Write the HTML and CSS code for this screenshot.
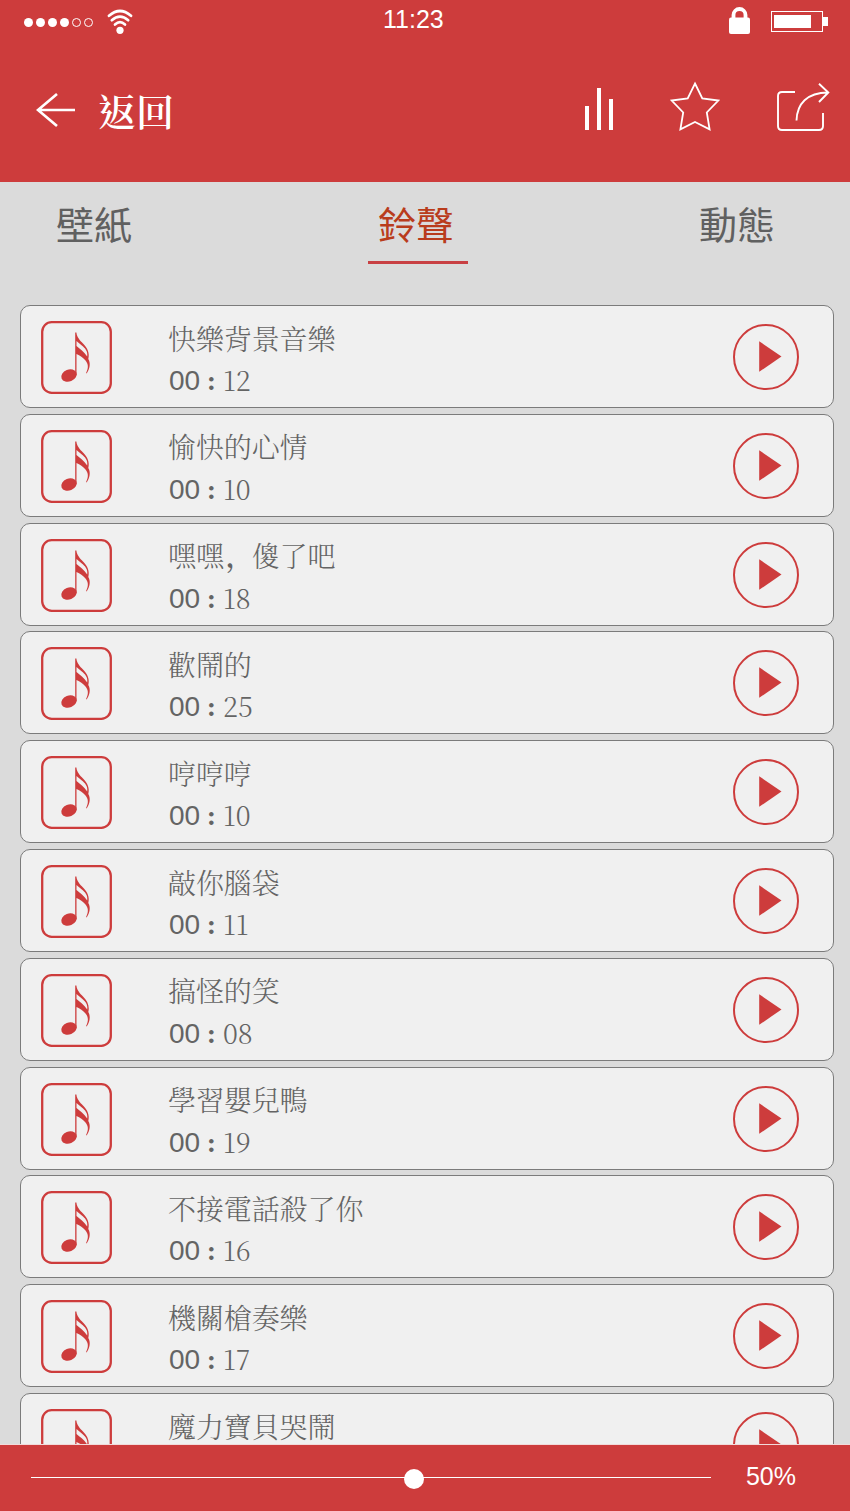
FILE: index.html
```html
<!DOCTYPE html>
<html lang="zh-Hant">
<head>
<meta charset="utf-8">
<title>鈴聲</title>
<link rel="stylesheet" href="styles.css">
</head>
<body>
<svg class="defs" aria-hidden="true">
  <symbol id="note" viewBox="0 0 71 73">
    <rect x="1.200" y="1.200" width="68.600" height="70.600" rx="9.500" fill="none" stroke="currentColor" stroke-width="2.300"/>
    <ellipse cx="28" cy="54.500" rx="8" ry="6" transform="rotate(-22 28 54.500)" fill="currentColor"/>
    <path fill="currentColor" d="M34.200 11.500h1.200C35.800 16 39 19.500 42 22.500C46.500 27 48.800 32 47.300 38C49.700 42 49 47.500 45.700 52.500L45.100 52C48 46 47 42.500 44.500 39.500C42 36.500 39 34.500 35.500 33V54H34.200zM35.500 20V25C39 28 43 30.500 46.200 35.500C47 30 44 27 40.500 24.200C38.500 22.600 37 21.500 35.500 20z" fill-rule="evenodd"/>
  </symbol>
  <symbol id="play" viewBox="0 0 66 66">
    <circle cx="33" cy="33" r="32" fill="none" stroke="currentColor" stroke-width="2"/>
    <path d="M26.200 17.300v30.500L48.500 32.500z" fill="currentColor"/>
  </symbol>
</svg>
<div class="screen">
  <header class="header">
    <div class="status">
      <svg class="signal" viewBox="0 0 70 10"><g fill="#fff"><circle cx="4.500" cy="5.500" r="4.500"/><circle cx="16.500" cy="5.500" r="4.500"/><circle cx="28.500" cy="5.500" r="4.500"/><circle cx="40.500" cy="5.500" r="4.500"/></g><g fill="none" stroke="#fff"><circle cx="52.500" cy="5.500" r="4"/><circle cx="64.500" cy="5.500" r="4"/></g></svg>
      <svg class="wifi" viewBox="0 0 26 26"><g fill="none" stroke="#fff" stroke-width="2.700" stroke-linecap="round"><path d="M2 6.800q11-9.600 22 0"/><path d="M4.800 11.200q8.200-7.200 16.400 0"/><path d="M8 15.500q5-4.600 10 0"/></g><circle cx="13" cy="21.300" r="3.600" fill="#fff"/></svg>
      <span class="clock">11:23</span>
      <svg class="lock" viewBox="0 0 21 28"><rect y="10.500" width="21" height="16.500" rx="2" fill="#fff"/><path d="M4.500 12V8a6 6 0 0 1 12 0V12" fill="none" stroke="#fff" stroke-width="3.800"/></svg>
      <svg class="battery" viewBox="0 0 58 22"><rect x=".5" y=".5" width="51" height="20" fill="none" stroke="#fff"/><path d="M3 4h37v13H3zM52 6h5v9h-5z" fill="#fff"/></svg>
    </div>
    <nav class="toolbar">
      <svg class="arrow" viewBox="0 0 41 36"><path d="M21 2 2 18l19 16M2 18h37" fill="none" stroke="#fff" stroke-width="2.700"/></svg>
      <span class="back">返回</span>
      <svg class="bars" viewBox="0 0 28 42"><path d="M0 18h4v24H0zM12 0h4v42h-4zM24 11h4v31h-4z" fill="#fff"/></svg>
      <svg class="star" viewBox="0 0 50 51"><path d="m25 2.500 7.300 14.800 16 2.200-11.500 12 2.800 16.800L25 41l-14.600 7.300 2.800-16.800-11.500-12 16-2.200z" fill="none" stroke="#fff" stroke-width="1.800"/></svg>
      <svg class="share" viewBox="0 0 53 50"><g fill="none" stroke="#fff" stroke-width="1.900"><path d="M18 10H5Q1 10 1 14v30q0 4 4 4h37q4 0 4-4V31"/><path d="M19.500 38.500C20 22 30 10.500 51 10.500M42 1.800l9.300 8.700-9.300 9.500"/></g></svg>
    </nav>
  </header>
  <nav class="tabs">
    <span class="tab">壁紙</span>
    <span class="tab active">鈴聲</span>
    <span class="tab">動態</span>
  </nav>
  <main class="list">
    <article class="card"><svg class="note"><use href="#note"/></svg><div class="info"><div class="title">快樂背景音樂</div><div class="time"><span class="min">00</span><span class="colon">:</span><span class="sec">12</span></div></div><svg class="play"><use href="#play"/></svg></article>
    <article class="card"><svg class="note"><use href="#note"/></svg><div class="info"><div class="title">愉快的心情</div><div class="time"><span class="min">00</span><span class="colon">:</span><span class="sec">10</span></div></div><svg class="play"><use href="#play"/></svg></article>
    <article class="card"><svg class="note"><use href="#note"/></svg><div class="info"><div class="title" lang="zh-Hans">嘿嘿<span class="comma">，</span>傻了吧</div><div class="time"><span class="min">00</span><span class="colon">:</span><span class="sec">18</span></div></div><svg class="play"><use href="#play"/></svg></article>
    <article class="card"><svg class="note"><use href="#note"/></svg><div class="info"><div class="title">歡鬧的</div><div class="time"><span class="min">00</span><span class="colon">:</span><span class="sec">25</span></div></div><svg class="play"><use href="#play"/></svg></article>
    <article class="card"><svg class="note"><use href="#note"/></svg><div class="info"><div class="title">哼哼哼</div><div class="time"><span class="min">00</span><span class="colon">:</span><span class="sec">10</span></div></div><svg class="play"><use href="#play"/></svg></article>
    <article class="card"><svg class="note"><use href="#note"/></svg><div class="info"><div class="title">敲你腦袋</div><div class="time"><span class="min">00</span><span class="colon">:</span><span class="sec">11</span></div></div><svg class="play"><use href="#play"/></svg></article>
    <article class="card"><svg class="note"><use href="#note"/></svg><div class="info"><div class="title">搞怪的笑</div><div class="time"><span class="min">00</span><span class="colon">:</span><span class="sec">08</span></div></div><svg class="play"><use href="#play"/></svg></article>
    <article class="card"><svg class="note"><use href="#note"/></svg><div class="info"><div class="title">學習嬰兒鴨</div><div class="time"><span class="min">00</span><span class="colon">:</span><span class="sec">19</span></div></div><svg class="play"><use href="#play"/></svg></article>
    <article class="card"><svg class="note"><use href="#note"/></svg><div class="info"><div class="title">不接電話殺了你</div><div class="time"><span class="min">00</span><span class="colon">:</span><span class="sec">16</span></div></div><svg class="play"><use href="#play"/></svg></article>
    <article class="card"><svg class="note"><use href="#note"/></svg><div class="info"><div class="title">機關槍奏樂</div><div class="time"><span class="min">00</span><span class="colon">:</span><span class="sec">17</span></div></div><svg class="play"><use href="#play"/></svg></article>
    <article class="card"><svg class="note"><use href="#note"/></svg><div class="info"><div class="title">魔力寶貝哭鬧</div></div><svg class="play"><use href="#play"/></svg></article>
  </main>
  <footer class="player">
    <div class="track"><span class="knob"></span></div>
    <span class="percent">50%</span>
  </footer>
</div>
</body>
</html>
```
FILE: styles.css
```css
* { box-sizing: border-box; }
body { margin: 0; }
svg { display: block; flex: none; }
.defs { position: absolute; width: 0; height: 0; }
.screen {
  display: flex;
  flex-direction: column;
  width: 850px;
  height: 1511px;
  overflow: hidden;
  background: #dbdbdb;
  font-family: "Liberation Sans", "Noto Sans CJK TC", sans-serif;
}
.header { flex: none; height: 182px; background: #cd3c3c; color: #fff; }
.status { display: flex; align-items: flex-start; height: 60px; padding: 0 22px 0 24px; }
.signal { width: 70px; height: 10px; margin-top: 17px; }
.wifi { width: 26px; height: 26px; margin: 9px 0 0 13px; }
.clock { width: 64px; margin: 4px auto 0 250px; font-size: 25px; line-height: 30px; white-space: nowrap; }
.lock { width: 21px; height: 28px; margin: 7px 21px 0 0; }
.battery { width: 58px; height: 22px; margin: 11px -1px 0 0; }
.toolbar { display: flex; align-items: flex-start; padding-left: 36px; }
.arrow { width: 41px; height: 36px; margin-top: 32px; }
.back { width: 76px; margin: 25px auto 0 21px; font: 600 38px/50px "Noto Serif CJK TC", "Noto Sans CJK TC", serif; white-space: nowrap; }
.bars { width: 28px; height: 42px; margin: 28px 57px 0 0; }
.star { width: 50px; height: 51px; margin: 21px 57px 0 0; }
.share { width: 53px; height: 50px; margin: 22px 20px 0 0; }
.tabs { display: flex; flex: none; justify-content: space-between; height: 123px; padding: 0 63px 0 44px; }
.tab {
  width: 100px;
  height: 82px;
  padding-top: 14px;
  color: #606060;
  font: 400 38px/54px "Noto Sans CJK TC", sans-serif;
  text-align: center;
}
.active { margin-left: 5px; border-bottom: 3px solid #c84043; color: #b93c1c; text-indent: -4px; }
.list { display: flex; flex: none; flex-direction: column; gap: 5.8px; height: 1139px; padding: 0 16px 0 20px; overflow: hidden; }
.card {
  display: flex;
  flex: none;
  align-items: flex-start;
  height: 103px;
  padding: 0 34px 0 20px;
  border: 1px solid #7b7b7b;
  border-radius: 10px;
  background: #f0f0f0;
  color: #cd3c3c;
}
.note { width: 71px; height: 73px; margin-top: 15px; }
.info { flex: 1; padding: 16.600px 0 0 56px; color: #646464; }
.title { height: 36.400px; font: 300 28px/30px "Noto Serif CJK TC", "Noto Sans CJK TC", serif; letter-spacing: -.1px; }
.comma { padding-left: 2px; letter-spacing: -2.100px; font-weight: 600; }
.time { display: flex; height: 44px; padding-left: 1px; font-size: 28px; line-height: 44px; }
.min { width: 31px; }
.colon { width: 23px; font-family: "Liberation Serif", serif; font-weight: 700; text-align: center; }
.sec { font-family: "Noto Serif CJK TC", "Liberation Serif", serif; font-size: 27px; font-weight: 300; line-height: 41px; }
.play { width: 66px; height: 66px; margin-top: 18px; }
.player { display: flex; flex: none; align-items: center; height: 67px; padding: 0 54px 1px 31px; border-top: 1px solid #f1dada; background: #cd3c3c; color: #fff; }
.track { position: relative; width: 680px; height: 1px; margin-right: auto; background: #fff; }
.knob { position: absolute; top: -8px; left: 373px; width: 20px; height: 20px; border-radius: 50%; background: #fff; }
.percent { margin-bottom: 4px; font-size: 25px; line-height: 30px; }
```
